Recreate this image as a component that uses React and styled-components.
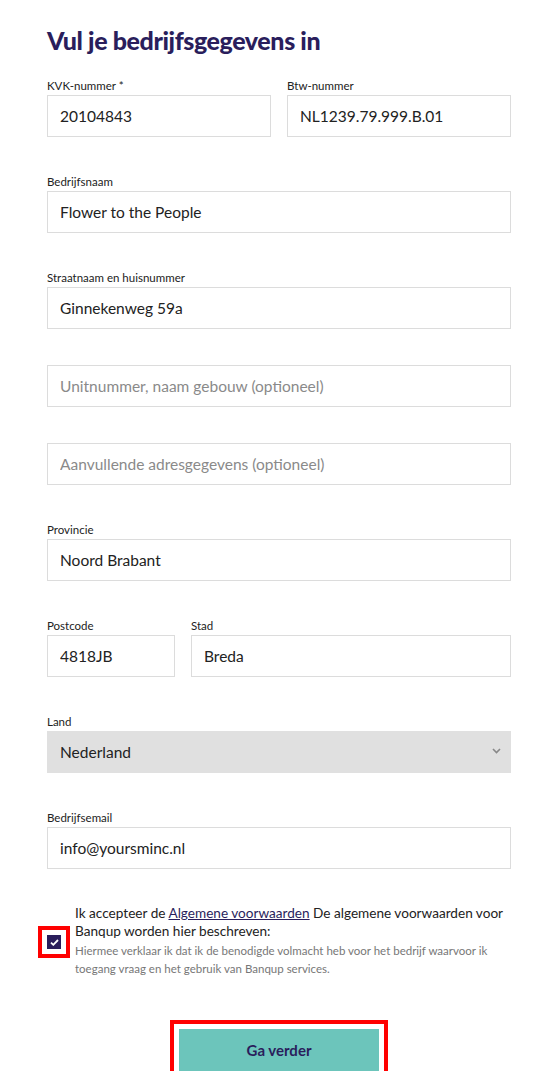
import React from "react";
import styled, { createGlobalStyle } from "styled-components";

const Global = createGlobalStyle`
  html, body { margin: 0; padding: 0; background: #fff; }
  body { font-family: Lato, "Open Sans", sans-serif; color: #222; }
  * { box-sizing: border-box; }
`;

const Page = styled.div`
  padding: 24px 31px 0 47px;
  width: 542px;
`;

const Title = styled.h1`
  margin: 0 0 21px;
  font-size: 25px;
  line-height: 32px;
  font-weight: 900;
  color: #2a1e5c;
  letter-spacing: -0.4px;
`;

const Row = styled.div`
  display: grid;
  grid-template-columns: ${(p) => p.$cols || "1fr"};
  column-gap: 16px;
  margin-bottom: 36px;
`;

const Field = styled.div`
  display: flex;
  flex-direction: column;
`;

const Label = styled.label`
  font-size: 11.5px;
  line-height: 18px;
  color: #222;
`;

const Input = styled.input`
  height: 42px;
  width: 100%;
  border: 1px solid #dcdcdc;
  padding: 0 12px;
  font-family: inherit;
  font-size: 15.5px;
  color: #222;
  background: #fff;
  outline: none;
  &::placeholder { color: #8a8a8a; }
`;

const SelectBox = styled.div`
  position: relative;
  height: 42px;
  background: #e0e0e0;
  display: flex;
  align-items: center;
  padding: 0 13px;
  font-size: 15.5px;
  color: #222;
`;

const Chevron = styled.svg`
  position: absolute;
  right: 10px;
  top: 17px;
`;

const Consent = styled.div`
  display: flex;
  align-items: center;
  gap: 14px;
  margin-top: -1px;
`;

const Check = styled.span`
  flex: none;
  width: 14px;
  height: 14px;
  background: #2a1e5c;
  display: flex;
  align-items: center;
  justify-content: center;
  outline: 4px solid #ff0000;
  outline-offset: 5px;
  margin-top: 2px;
`;

const ConsentText = styled.div`
  display: flex;
  flex-direction: column;
`;

const Main = styled.p`
  margin: 0;
  font-size: 13.6px;
  line-height: 18px;
  color: #222;
  a { color: #2a1e5c; text-decoration: underline; }
`;

const Small = styled.p`
  margin: 2px 0 0;
  font-size: 11.5px;
  line-height: 18px;
  color: #777;
`;

const ButtonWrap = styled.div`
  display: flex;
  justify-content: center;
  margin-top: 51px;
`;

const Button = styled.button`
  width: 200px;
  height: 42px;
  background: #6cc5bb;
  border: none;
  font-family: inherit;
  font-weight: 700;
  font-size: 15px;
  color: #2a1e5c;
  outline: 4px solid #ff0000;
  outline-offset: 5px;
`;

function F({ label, value, placeholder }) {
  return (
    <Field>
      {label && <Label>{label}</Label>}
      <Input defaultValue={value} placeholder={placeholder} />
    </Field>
  );
}

export default function App() {
  return (
    <Page>
      <Global />
      <Title>Vul je bedrijfsgegevens in</Title>
      <Row $cols="1fr 1fr">
        <F label="KVK-nummer *" value="20104843" />
        <F label="Btw-nummer" value="NL1239.79.999.B.01" />
      </Row>
      <Row>
        <F label="Bedrijfsnaam" value="Flower to the People" />
      </Row>
      <Row>
        <F label="Straatnaam en huisnummer" value="Ginnekenweg 59a" />
      </Row>
      <Row>
        <F placeholder="Unitnummer, naam gebouw (optioneel)" />
      </Row>
      <Row>
        <F placeholder="Aanvullende adresgegevens (optioneel)" />
      </Row>
      <Row>
        <F label="Provincie" value="Noord Brabant" />
      </Row>
      <Row $cols="128px 1fr">
        <F label="Postcode" value="4818JB" />
        <F label="Stad" value="Breda" />
      </Row>
      <Row>
        <Field>
          <Label>Land</Label>
          <SelectBox>
            Nederland
            <Chevron width="9" height="6" viewBox="0 0 9 6">
              <path d="M1 1l3.5 3.5L8 1" stroke="#888" strokeWidth="1.6" fill="none" />
            </Chevron>
          </SelectBox>
        </Field>
      </Row>
      <Row>
        <F label="Bedrijfsemail" value="info@yoursminc.nl" />
      </Row>
      <Consent>
        <Check>
          <svg width="9" height="7" viewBox="0 0 9 7">
            <path d="M1 3.6l2.3 2.2L8 1" stroke="#fff" strokeWidth="1.8" fill="none" />
          </svg>
        </Check>
        <ConsentText>
          <Main>
            Ik accepteer de <a href="#">Algemene voorwaarden</a> De algemene voorwaarden voor Banqup worden hier beschreven:
          </Main>
          <Small>
            Hiermee verklaar ik dat ik de benodigde volmacht heb voor het bedrijf waarvoor ik toegang vraag en het gebruik van Banqup services.
          </Small>
        </ConsentText>
      </Consent>
      <ButtonWrap>
        <Button>Ga verder</Button>
      </ButtonWrap>
    </Page>
  );
}
